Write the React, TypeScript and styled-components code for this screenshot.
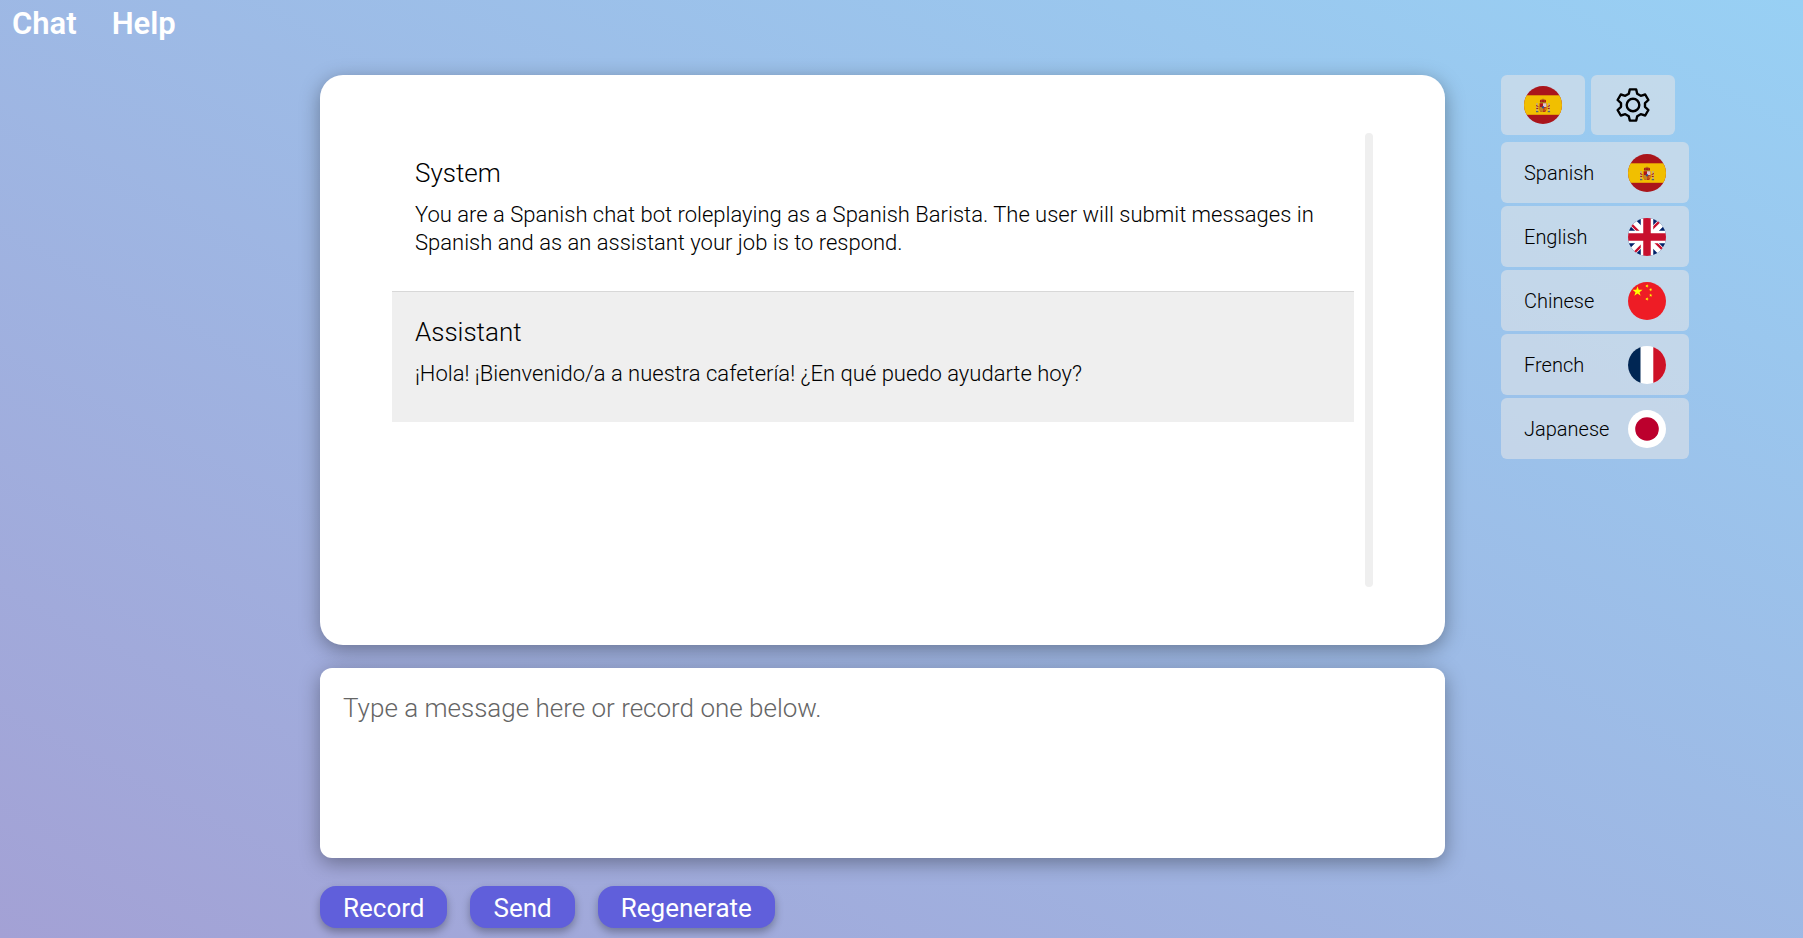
import React from "react";
import styled, { createGlobalStyle } from "styled-components";

const GlobalStyle = createGlobalStyle`
  * { box-sizing: border-box; }
  body {
    margin: 0;
    min-height: 100vh;
    font-family: Roboto, "Liberation Sans", sans-serif;
    font-weight: 300;
    color: #000;
    background: linear-gradient(to top right, #a3a1d5, #98d0f4) no-repeat fixed;
  }
`;

const Nav = styled.nav`
  display: flex;
  gap: 35px;
  height: 48px;
  padding: 0 12px;
`;

const NavLink = styled.a`
  font-size: 31px;
  line-height: 48px;
  font-weight: 600;
  color: #fff;
  text-decoration: none;
`;

const Page = styled.div`
  display: grid;
  grid-template-columns: 264px minmax(0, 1fr) 302px;
  column-gap: 56px;
  padding-top: 27px;
`;

const Main = styled.main`
  grid-column: 2;
`;

const Card = styled.section`
  height: 570px;
  padding: 58px 72px;
  border-radius: 23px;
  background: #fff;
  box-shadow: 0 5px 20px rgba(0, 0, 0, 0.35);
`;

const MessageScroller = styled.div`
  display: flex;
  gap: 11px;
  height: 100%;
`;

const Messages = styled.div`
  flex: 1;
  min-width: 0;
`;

const ScrollTrack = styled.div`
  width: 8px;
  border-radius: 4px;
  background: #efefef;
`;

const Message = styled.article<{ $shaded?: boolean }>`
  padding: 24px 23px 34px;
  background: ${(p) => (p.$shaded ? "#efefef" : "#fff")};
  border-top: ${(p) => (p.$shaded ? "1px solid #d8d8d8" : "0")};
`;

const Role = styled.h2`
  margin: 0 0 12px;
  font-size: 26px;
  line-height: 32px;
  font-weight: 300;
`;

const Body = styled.p`
  margin: 0;
  font-size: 22px;
  line-height: 28px;
`;

const Composer = styled.textarea`
  display: block;
  width: 100%;
  height: 190px;
  margin: 23px 0 28px;
  padding: 23px;
  border: 0;
  border-radius: 12px;
  outline: 0;
  resize: none;
  background: #fff;
  font: 300 26px/34px Roboto, "Liberation Sans", sans-serif;
  box-shadow: 0 5px 20px rgba(0, 0, 0, 0.35);
  &::placeholder { color: #656565; }
`;

const Actions = styled.div`
  display: flex;
  gap: 23px;
`;

const ActionButton = styled.button`
  height: 42px;
  padding: 3px 23px 0;
  border: 0;
  border-radius: 16px;
  background: #605fdb;
  color: #fff;
  font: 400 26px/39px Roboto, "Liberation Sans", sans-serif;
  box-shadow: 0 4px 8px rgba(0, 0, 0, 0.3);
`;

const Side = styled.aside`
  width: 188px;
`;

const Tools = styled.div`
  display: flex;
  gap: 6px;
  margin-bottom: 7px;
`;

const tile = `
  display: flex;
  align-items: center;
  border: 0;
  border-radius: 6px;
  background: rgba(223, 226, 232, 0.6);
  color: #000;
`;

const ToolButton = styled.button`
  ${tile}
  justify-content: center;
  width: 84px;
  height: 60px;
  padding: 0;
`;

const LanguageList = styled.ul`
  display: grid;
  gap: 3px;
  margin: 0;
  padding: 0;
  list-style: none;
`;

const LanguageButton = styled.button`
  ${tile}
  justify-content: space-between;
  width: 100%;
  height: 61px;
  padding: 1px 23px 0;
  font: 300 20px/24px Roboto, "Liberation Sans", sans-serif;
`;

const FlagSvg = styled.svg`
  display: block;
  width: 38px;
  height: 38px;
`;

type Lang = "Spanish" | "English" | "Chinese" | "French" | "Japanese";

const star = (cx: number, cy: number, r: number, turn = 0) =>
  Array.from({ length: 10 }, (_, i) => {
    const a = ((i * 36 - 90 + turn) * Math.PI) / 180;
    const d = i % 2 ? r * 0.4 : r;
    return `${cx + d * Math.cos(a)},${cy + d * Math.sin(a)}`;
  }).join(" ");

const art: Record<Lang, React.ReactNode> = {
  Spanish: (
    <>
      <rect width="38" height="38" fill="#aa151b" />
      <rect y="9.3" width="38" height="19.5" fill="#f1bf00" />
      <path d="M13 17v8.5M25 17v8.5" stroke="#b8a894" strokeWidth="1.3" />
      <path d="M12 25.7h2.400M23.700 25.700h2.400" stroke="#31507f" strokeWidth="1" />
      <path d="M12 19.500l2.500 1.200M26 19.500l-2.500 1.200M12.300 22.500h2M23.700 22.500h2" stroke="#aa151b" strokeWidth="1" />
      <path d="M15.600 17.300h6.800v5.600a3.400 3.200 0 0 1-6.800 0z" fill="#ad1519" />
      <path d="M19 17.300h3.400v3.800H19z" fill="#dcc6cd" />
      <path d="M15.600 21.100H19v4.900a3.200 3.100 0 0 1-3.400-3z" fill="#c6851e" />
      <path d="M20 21.500v4M21.400 21.500v3" stroke="#e7b51b" strokeWidth=".7" />
      <ellipse cx="19" cy="21.300" rx="1.100" ry="1.300" fill="#34518c" />
      <path d="M16.300 16.500c-1.300-2.400.8-3 2.700-2.900 1.900-.1 4 .5 2.700 2.900z" fill="#ad1519" />
      <path d="M16.200 16.500h5.600M19 12.600v1.800M17.500 14.500v1M20.500 14.500v1" stroke="#9b7b1a" strokeWidth=".8" />
    </>
  ),
  English: (
    <>
      <rect width="38" height="38" fill="#012169" />
      <path d="M0 0l38 38M38 0L0 38" stroke="#fff" strokeWidth="8" />
      <path
        d="M-1.500 1.500L19 22M19 16l20.500 20.500M36.500-1.500L16 19M22 19L1.500 39.500"
        stroke="#c8102e"
        strokeWidth="2.4"
      />
      <path d="M19 0v38M0 19h38" stroke="#fff" strokeWidth="12.5" />
      <path d="M19 0v38M0 19h38" stroke="#c8102e" strokeWidth="7.5" />
    </>
  ),
  Chinese: (
    <>
      <rect width="38" height="38" fill="#ee1c25" />
      <g fill="#ff0">
        <polygon points={star(9.5, 9.5, 5.3)} />
        <polygon points={star(19, 4, 1.8, 20)} />
        <polygon points={star(22.7, 7.7, 1.8, 45)} />
        <polygon points={star(22.7, 13.3, 1.8)} />
        <polygon points={star(19, 17, 1.8, 20)} />
      </g>
    </>
  ),
  French: (
    <>
      <rect width="38" height="38" fill="#fff" />
      <rect width="12.5" height="38" fill="#002654" />
      <rect x="25.3" width="12.7" height="38" fill="#ce1126" />
    </>
  ),
  Japanese: (
    <>
      <rect width="38" height="38" fill="#fff" />
      <circle cx="19" cy="19" r="11.8" fill="#bc002d" />
    </>
  ),
};

const Flag = ({ lang, id }: { lang: Lang; id: string }) => (
  <FlagSvg viewBox="0 0 38 38" aria-hidden="true">
    <clipPath id={id}>
      <circle cx="19" cy="19" r="19" />
    </clipPath>
    <g clipPath={`url(#${id})`}>{art[lang]}</g>
  </FlagSvg>
);

const Gear = () => (
  <svg
    width="34"
    height="36"
    viewBox="0 0 34 36"
    fill="none"
    stroke="#000"
    strokeWidth="2.4"
    strokeLinejoin="round"
    aria-hidden="true"
  >
    <circle cx="17" cy="18" r="6.3" />
    <path d="M13.800 2.400h6.400l1 4.400 3.500 2 4.500-1.300 3.200 5.500-3.400 3.200v3.600l3.400 3.200-3.200 5.500-4.500-1.300-3.500 2-1 4.400h-6.400l-1-4.400-3.500-2-4.500 1.300L1.600 23 5 19.800v-3.600L1.600 13l3.200-5.500 4.500 1.300 3.500-2z" />
  </svg>
);

const languages: Lang[] = ["Spanish", "English", "Chinese", "French", "Japanese"];

export default function App() {
  return (
    <>
      <GlobalStyle />
      <Nav>
        <NavLink href="#chat">Chat</NavLink>
        <NavLink href="#help">Help</NavLink>
      </Nav>
      <Page>
        <Main>
          <Card>
            <MessageScroller>
              <Messages>
                <Message>
                  <Role>System</Role>
                  <Body>
                    You are a Spanish chat bot roleplaying as a Spanish Barista. The user will submit messages in Spanish
                    and as an assistant your job is to respond.
                  </Body>
                </Message>
                <Message $shaded>
                  <Role>Assistant</Role>
                  <Body>¡Hola! ¡Bienvenido/a a nuestra cafetería! ¿En qué puedo ayudarte hoy?</Body>
                </Message>
              </Messages>
              <ScrollTrack />
            </MessageScroller>
          </Card>
          <Composer aria-label="Message" placeholder="Type a message here or record one below." />
          <Actions>
            <ActionButton type="button">Record</ActionButton>
            <ActionButton type="button">Send</ActionButton>
            <ActionButton type="button">Regenerate</ActionButton>
          </Actions>
        </Main>
        <Side>
          <Tools>
            <ToolButton type="button" aria-label="Language">
              <Flag lang="Spanish" id="flag-current" />
            </ToolButton>
            <ToolButton type="button" aria-label="Settings">
              <Gear />
            </ToolButton>
          </Tools>
          <LanguageList>
            {languages.map((lang) => (
              <li key={lang}>
                <LanguageButton type="button">
                  {lang}
                  <Flag lang={lang} id={`flag-${lang}`} />
                </LanguageButton>
              </li>
            ))}
          </LanguageList>
        </Side>
      </Page>
    </>
  );
}
